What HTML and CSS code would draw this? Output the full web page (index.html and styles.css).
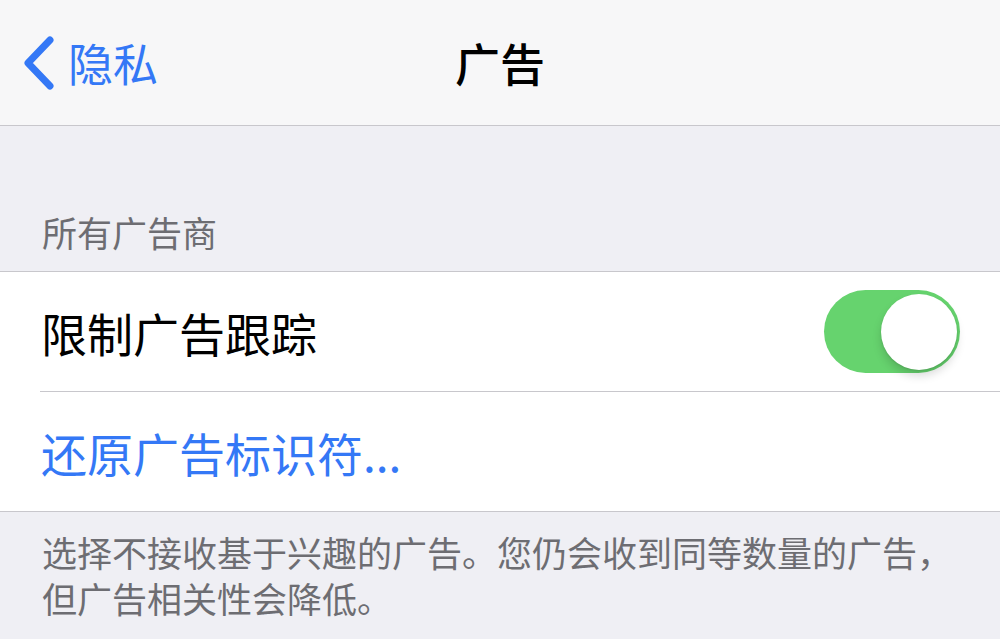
FILE: index.html
```html
<!DOCTYPE html>
<html>
<head>
    <title>广告</title>
    <link rel="stylesheet" href="styles.css">
</head>
<body>
    <!-- Navigation bar -->
    <div class="navbar">
        <a class="back" href="#">
            <svg class="chevron" width="36" height="56" viewBox="0 0 36 56">
                <path d="M30 5 L8 28 L30 51" fill="none" stroke="#3478f6" stroke-width="7" stroke-linecap="round" stroke-linejoin="round"/>
            </svg>
            <span>隐私</span>
        </a>
        <div class="title">广告</div>
        <div></div>
    </div>

    <!-- Section -->
    <div class="section-header">所有广告商</div>
    <div class="group">
        <div class="row">
            <span class="label">限制广告跟踪</span>
            <div class="switch on"><div class="knob"></div></div>
        </div>
        <div class="row">
            <span class="label link">还原广告标识符...</span>
        </div>
    </div>
    <div class="section-footer">选择不接收基于兴趣的广告。您仍会收到同等数量的广告，但广告相关性会降低。</div>
</body>
</html>
```

FILE: styles.css
```css
body {
    margin: 0;
    background: #efeff4;
    font-family: "Noto Sans CJK SC", "Noto Sans", sans-serif;
    color: #000;
}

.navbar {
    height: 125px;
    background: #f7f7f8;
    border-bottom: 1px solid #c8c7cc;
    display: grid;
    grid-template-columns: 1fr auto 1fr;
    align-items: center;
}
.back {
    display: flex;
    align-items: center;
    gap: 12px;
    padding-left: 20px;
    color: #3478f6;
    text-decoration: none;
    font-size: 45px;
}
.chevron { display: block; }
.title {
    font-size: 45px;
    font-weight: 500;
}

.section-header {
    padding: 83px 42px 16px;
    font-size: 35px;
    line-height: 46px;
    color: #6d6d72;
}

.group {
    background: #fff;
    border-top: 1px solid #c8c7cc;
    border-bottom: 1px solid #c8c7cc;
}
.row {
    height: 119px;
    margin-left: 40px;
    padding-right: 40px;
    display: flex;
    align-items: center;
    justify-content: space-between;
}
.row + .row { border-top: 1px solid #c8c7cc; }
.label {
    font-size: 46px;
    padding-left: 1px;
}
.link { color: #3478f6; }

.switch {
    width: 136px;
    height: 83px;
    border-radius: 42px;
    background: #e5e5ea;
    display: flex;
    align-items: center;
    padding: 0 3px;
    box-sizing: border-box;
}
.switch.on {
    background: #66d36e;
    justify-content: flex-end;
}
.knob {
    width: 76px;
    height: 76px;
    border-radius: 50%;
    background: #fff;
    box-shadow: 0 6px 10px rgba(0,0,0,0.15), 0 1px 2px rgba(0,0,0,0.1);
}

.section-footer {
    padding: 17px 42px 0;
    font-size: 35px;
    line-height: 46px;
    color: #6d6d72;
}
```
